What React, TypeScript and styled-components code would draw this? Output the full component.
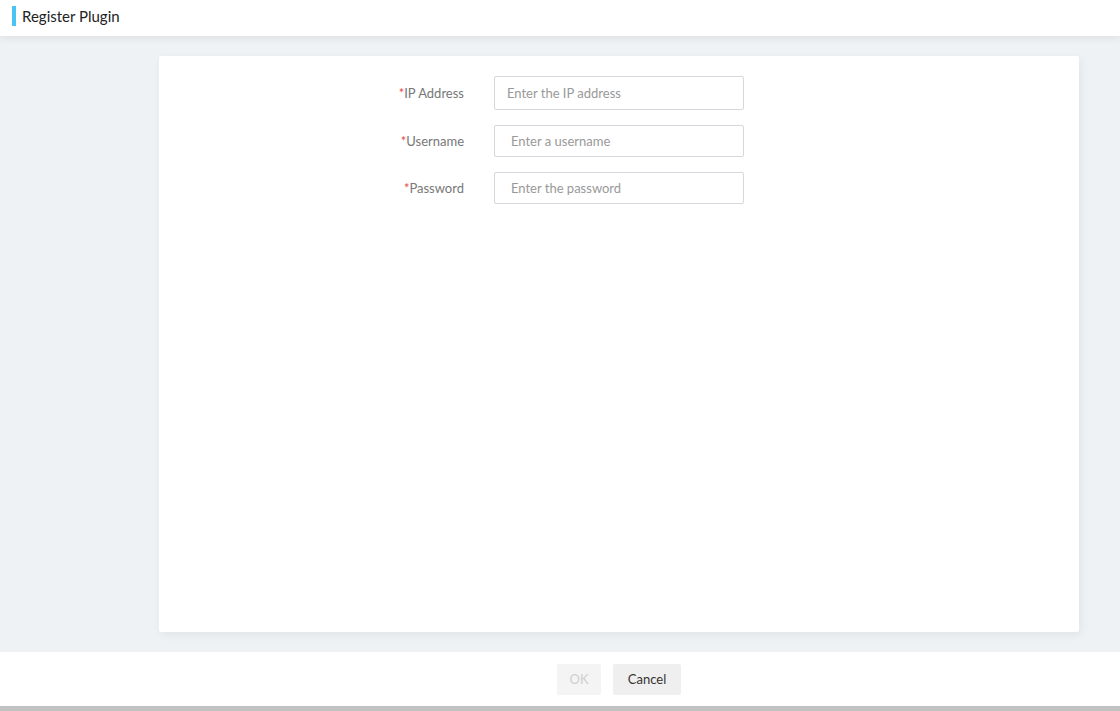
import { Fragment } from "react";
import styled, { createGlobalStyle } from "styled-components";

const GlobalStyle = createGlobalStyle`
  html, body {
    margin: 0;
    padding: 0;
    background: #eef2f5;
    font-family: "Source Sans Pro", Lato, "Noto Sans", sans-serif;
  }
  #root {
    height: 711px;
  }
`;

const Page = styled.div`
  display: flex;
  flex-direction: column;
  height: 711px;
  background: #eef2f5;
`;

const Header = styled.div`
  height: 36px;
  flex-shrink: 0;
  display: flex;
  align-items: flex-start;
  padding-top: 6px;
  box-sizing: border-box;
  background: #fff;
  box-shadow: 0 2px 8px rgba(0, 0, 0, 0.08);
  position: relative;
  z-index: 1;
`;

const Title = styled.h1`
  margin: 0 0 0 12px;
  padding-left: 6px;
  border-left: 4px solid #49c5f5;
  font-size: 15px;
  font-weight: 400;
  line-height: 20px;
  color: #222;
`;

const Main = styled.div`
  flex: 1;
  display: flex;
  padding: 20px 41px 20px 159px;
`;

const Card = styled.div`
  flex: 1;
  background: #fff;
  border-radius: 2px;
  box-shadow: 2px 3px 10px rgba(0, 0, 0, 0.06);
  padding-top: 20px;
`;

const Form = styled.div`
  display: grid;
  grid-template-columns: 1fr 250px 1fr;
  row-gap: 15px;
  align-items: center;
`;

const Label = styled.label`
  justify-self: end;
  padding-right: 30px;
  font-size: 13px;
  color: #777;
`;

const Star = styled.span`
  color: #e64b4b;
`;

const Input = styled.input<{ $h: number; $pad: number }>`
  box-sizing: border-box;
  width: 250px;
  height: ${(p) => p.$h}px;
  border: 1px solid #d6d6dc;
  border-radius: 2px;
  padding: 0 ${(p) => p.$pad}px;
  font-family: inherit;
  font-size: 13px;
  color: #333;
  outline: none;

  &::placeholder {
    color: #999;
  }
`;

const Footer = styled.div`
  height: 54px;
  flex-shrink: 0;
  background: #fff;
  display: flex;
  align-items: center;
  justify-content: center;
  gap: 12px;
  padding: 0 41px 0 159px;
  border-bottom: 5px solid #c2c2c2;
`;

const Button = styled.button<{ $w: number; $disabled?: boolean }>`
  width: ${(p) => p.$w}px;
  height: 31px;
  border: none;
  border-radius: 2px;
  background: ${(p) => (p.$disabled ? "#f4f4f4" : "#efefef")};
  color: ${(p) => (p.$disabled ? "#cfcfcf" : "#333")};
  font-family: inherit;
  font-size: 13px;
  cursor: ${(p) => (p.$disabled ? "default" : "pointer")};
`;

const Spacer = styled.div``;

export default function App() {
  const fields = [
    { label: "IP Address", ph: "Enter the IP address", h: 34, pad: 12 },
    { label: "Username", ph: "Enter a username", h: 32, pad: 16 },
    { label: "Password", ph: "Enter the password", h: 32, pad: 16, type: "password" },
  ];
  return (
    <>
      <GlobalStyle />
      <Page>
        <Header>
          <Title>Register Plugin</Title>
        </Header>
        <Main>
          <Card>
            <Form>
              {fields.map((f) => (
                <Fragment key={f.label}>
                  <Label>
                    <Star>*</Star>
                    {f.label}
                  </Label>
                  <Input
                    $h={f.h}
                    $pad={f.pad}
                    type={f.type || "text"}
                    placeholder={f.ph}
                  />
                  <Spacer />
                </Fragment>
              ))}
            </Form>
          </Card>
        </Main>
        <Footer>
          <Button $w={44} $disabled>
            OK
          </Button>
          <Button $w={68}>Cancel</Button>
        </Footer>
      </Page>
    </>
  );
}
